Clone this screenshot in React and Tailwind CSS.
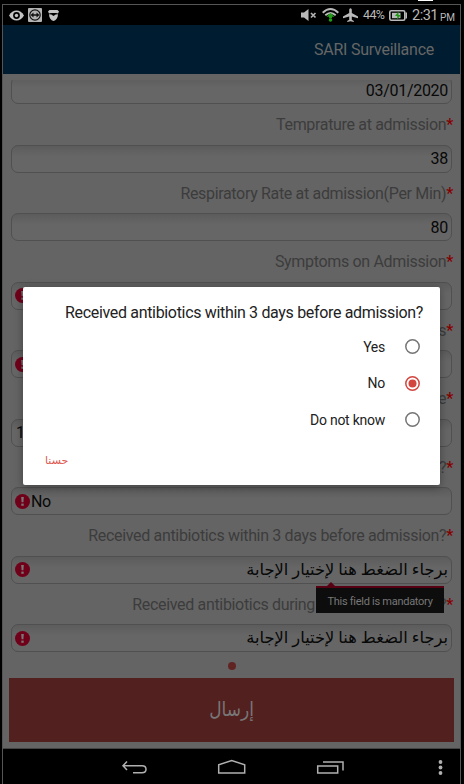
const placeholder = 'برجاء الضغط هنا لإختيار الإجابة';

const fields = [
  { value: '03/01/2020' },
  { label: 'Temprature at admission', value: '38' },
  { label: 'Respiratory Rate at admission(Per Min)', value: '80' },
  { label: 'Symptoms on Admission', error: true },
  { label: 's', error: true },
  { label: 'e', start: '1' },
  { label: '?', start: 'No', error: true },
  { label: 'Received antibiotics within 3 days before admission?', value: placeholder, arabic: true, error: true },
  { label: 'Received antibiotics during', labelEnd: '?', value: placeholder, arabic: true, error: true },
];

const options = ['Yes', 'No', 'Do not know'];

const ErrorIcon = () => (
  <svg className="w-[15px] h-[15px] shrink-0" viewBox="0 0 15 15">
    <circle cx="7.5" cy="7.5" r="7.5" fill="#70001a" />
    <path d="M6.2 3h2.6l-.4 5.3H6.6z" fill="#777" />
    <rect x="6.3" y="9.6" width="2.4" height="2.2" fill="#777" />
  </svg>
);

const StatusBar = () => (
  <div className="h-5 shrink-0 bg-black flex items-center justify-between pl-[6px] pr-[5px] text-[#b9b9b9]">
    <div className="flex items-center">
      <svg className="w-[15px] h-[11px]" viewBox="0 0 15 11">
        <path d="M0 5.5C2 2 4.5.4 7.5.4S13 2 15 5.5c-2 3.5-4.5 5.1-7.5 5.1S2 9 0 5.5z" fill="#c4c4c4" />
        <circle cx="7.5" cy="5.5" r="3.4" fill="#000" />
        <circle cx="7.5" cy="5.5" r="1.7" fill="#c4c4c4" />
      </svg>
      <svg className="w-[14px] h-[14px] ml-1" viewBox="0 0 14 14">
        <rect width="14" height="14" rx="1" fill="#b4b4b4" />
        <circle cx="7" cy="7" r="5.2" fill="none" stroke="#111" strokeWidth="1.2" />
        <path d="M2.5 7l3-2.5v1.7h3V4.5l3 2.5-3 2.5V7.8h-3v1.7z" fill="#111" />
      </svg>
      <svg className="w-[11px] h-[11px] ml-[6px]" viewBox="0 0 11 11">
        <path d="M1.5 0h8L11 1.5 10 3.5 8 3H3L1 3.5 0 1.5z" fill="#c4c4c4" />
        <path d="M1 4.3l2.3.2L5.5 6l2.2-1.5 2.3-.2C10 8 8 10.3 5.5 11 3 10.3 1 8 1 4.3z" fill="#c4c4c4" />
      </svg>
    </div>
    <div className="flex items-center">
      <svg className="w-4 h-3 shrink-0" viewBox="0 0 16 12">
        <path d="M0 3.5h3L7.5 0v12L3 8.5H0z" fill="#b9b9b9" />
        <path d="M10 4l4.5 4.5M14.5 4L10 8.5" stroke="#b0b0b0" strokeWidth="1.7" />
      </svg>
      <svg className="w-[17px] h-[14px] shrink-0 ml-[5px]" viewBox="0 0 17 14" fill="none">
        <path d="M.7 4.8Q8.5-2.6 16.3 4.8M3.3 7.3Q8.5 2.7 13.7 7.3" stroke="#b9b9b9" strokeWidth="1.9" />
        <path d="M8.5 4.8l4 4H10v1.5H7V8.8H4.5z" fill="#229b16" />
        <circle cx="8.5" cy="12" r="1.8" fill="#229b16" />
      </svg>
      <svg className="w-[15px] h-[14px] shrink-0 ml-1" viewBox="0 0 15 14">
        <path d="M6.2 1.5Q7.5-1.2 8.8 1.5V5L15 8.6v1.6L8.800 8.500v3.200l2 1.200V14L7.500 13.200 4.200 14v-1.100l2-1.200V8.500L0 10.200V8.600L6.200 5z" fill="#b9b9b9" />
      </svg>
      <span className="ml-[5px] w-[26px] text-[12.5px] tracking-[-0.6px]">44%</span>
      <svg className="w-[18px] h-[11px] shrink-0" viewBox="0 0 18 11">
        <rect x=".8" y=".8" width="15" height="9.4" rx="1.5" fill="none" stroke="#b9b9b9" strokeWidth="1.6" />
        <rect x="16.5" y="2.5" width="1.5" height="6" fill="#b9b9b9" />
        <rect x="3" y="2.8" width="8.5" height="5.4" fill="#b9b9b9" />
        <path d="M9.5 1.5L6 6h2.200v3.500L11.800 5H9.500z" fill="#229b16" />
      </svg>
      <span className="ml-[5px] w-[28px] text-[14.5px] tracking-[-0.5px] pt-px">2:31</span>
      <span className="text-[10px] pt-[4px] w-[15px]">PM</span>
    </div>
  </div>
);

const Field = ({ label, labelEnd, value, start, error, arabic }) => (
  <div className="h-[68.5px] shrink-0 flex flex-col justify-end">
    {label && (
      <div className="h-[40.5px] pr-[7px] pt-[11px] flex justify-end text-[16px] tracking-[-0.33px] leading-[20px] text-[#3c3c3c] whitespace-nowrap">
        <span>{label}</span>
        {labelEnd && <span className="ml-[124px]">{labelEnd}</span>}
        <span className="text-[#850000] font-medium">*</span>
      </div>
    )}
    <div className="h-7 shrink-0 ml-[8px] mr-[8px] px-[3px] flex items-center border-[1.5px] border-[#505050] rounded-[7px] bg-linear-to-b from-[#5c5c5c] to-[#666] to-40% text-[16px] tracking-[-0.3px] text-[#080808]">
      {error && <ErrorIcon />}
      <span className={start === '1' ? 'pl-px' : 'pl-px pt-px'}>{start}</span>
      {arabic ? (
        <span dir="rtl" className="ml-auto text-[16.3px] tracking-normal leading-6 whitespace-nowrap">{value}</span>
      ) : (
        <span className="ml-auto pt-px">{value}</span>
      )}
    </div>
  </div>
);

const Dialog = () => (
  <div className="absolute left-[23px] top-[287px] w-[417px] h-[198px] bg-white rounded-[2px] shadow-[0_2px_8px_rgba(0,0,0,0.35)] flex flex-col text-[#222]">
    <h2 className="pt-[15px] pr-[17px] text-right text-[16px] tracking-[-0.33px] leading-[22px]">
      Received antibiotics within 3 days before admission?
    </h2>
    <div className="pt-[4.5px] pr-5">
      {options.map((option) => (
        <div key={option} className="h-[36.5px] flex items-center justify-end gap-5 text-[14px] tracking-[-0.25px]">
          <span className="pt-px">{option}</span>
          <svg className="w-[15px] h-[15px]" viewBox="0 0 15 15">
            <circle cx="7.5" cy="7.5" r="6.7" fill="none" stroke={option === 'No' ? '#d3453f' : '#757575'} strokeWidth="1.5" />
            {option === 'No' && <circle cx="7.5" cy="7.5" r="4" fill="#d3453f" />}
          </svg>
        </div>
      ))}
    </div>
    <button dir="rtl" className="self-start ml-[22px] mt-[13px] text-[11px] leading-5 text-[#e05750]">حسنا</button>
  </div>
);

const Tooltip = () => (
  <div className="absolute left-[316px] top-[582px] w-32">
    <svg className="w-2 h-1 ml-[11px]" viewBox="0 0 8 4"><path d="M0 4l4-4 4 4z" fill="#570014" /></svg>
    <div className="h-[27px] border-t-2 border-[#570014] bg-[#0d0d0d] flex items-center justify-center pt-[3px] text-[11px] tracking-[-0.27px] text-[#777]">
      This field is mandatory
    </div>
  </div>
);

const NavBar = () => (
  <div className="h-9 shrink-0 bg-black border-t border-[#444]">
    <svg className="w-[457px] h-[35px]" viewBox="0 0 457 35" fill="none" stroke="#b0b0b0" strokeWidth="1.5">
      <path d="M124 12.5l-4 4.2 4 4.2M120 16.7h19q4 0 4 3.5t-4 3.5h-9" />
      <path d="M215.700 24v-8.200l13-4.300 13 4.300V24z" />
      <path d="M314.700 17h20v7h-20zM320 13h20v8.500" />
      <g fill="#b0b0b0" stroke="none">
        <circle cx="437.5" cy="13" r="1.9" />
        <circle cx="437.5" cy="18.5" r="1.9" />
        <circle cx="437.5" cy="24" r="1.9" />
      </g>
    </svg>
  </div>
);

export default function App() {
  return (
    <div className="relative w-[464px] h-[784px] overflow-hidden bg-black pt-1 pl-[2px] pr-[3px] font-[Roboto,'Noto_Sans','DejaVu_Sans',sans-serif]">
      <div className="absolute left-[418px] top-0 w-[15px] h-px bg-white" />
      <div className="h-[780px] flex flex-col border-t border-x border-[#555]">
        <StatusBar />
        <header className="h-[49px] shrink-0 bg-[#001c30] flex items-center justify-end pr-[26px] text-[16px] tracking-[-0.25px] text-[#666]">
          SARI Surveillance
        </header>
        <main className="h-[674px] shrink-0 bg-[#646464] pt-[6px]">
          <div className="h-[572.4px] overflow-hidden flex flex-col justify-end">
            {fields.map((field, i) => (
              <Field key={i} {...field} />
            ))}
          </div>
          <div className="h-[25.6px] pt-[2px] flex items-center justify-center">
            <span className="size-2 rounded-full bg-[#602523]" />
          </div>
          <button dir="rtl" className="block w-[445px] h-[64px] ml-[6px] bg-[#532020] text-[#777] text-[17px]">
            <span className="inline-block scale-y-115">إرسال</span>
          </button>
        </main>
        <NavBar />
      </div>
      <Tooltip />
      <Dialog />
    </div>
  );
}
